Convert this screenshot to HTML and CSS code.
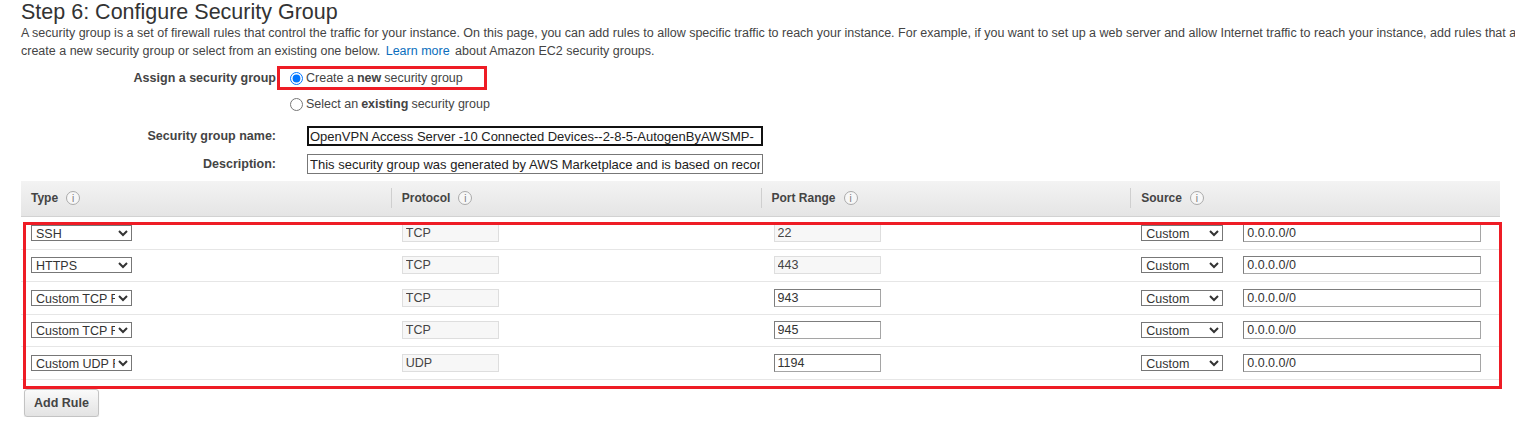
FILE: index.html
```html
<!DOCTYPE html>
<html>
<head>
    <title>Configure Security Group</title>
    <link rel="stylesheet" href="styles.css">
</head>
<body>
    <div class="page">
        <h1 class="title">Step 6: Configure Security Group</h1>
        <p class="intro">A security group is a set of firewall rules that control the traffic for your instance. On this page, you can add rules to allow specific traffic to reach your instance. For example, if you want to set up a web server and allow Internet traffic to reach your instance, add rules that allow unrestricted access to the HTTP and HTTPS ports. You can<br>create a new security group or select from an existing one below. <a href="#" class="learn-more">Learn more</a> about Amazon EC2 security groups.</p>

        <div class="form-row assign-row">
            <div class="form-label">Assign a security group</div>
            <div class="radio-list">
                <label class="radio-option"><input type="radio" name="sg-mode" checked>Create a <b>new</b> security group</label>
                <label class="radio-option"><input type="radio" name="sg-mode">Select an <b>existing</b> security group</label>
            </div>
            <div class="highlight highlight-radio"></div>
        </div>

        <div class="form-row name-row">
            <div class="form-label">Security group name:</div>
            <input type="text" class="text-field text-field-focus" value="OpenVPN Access Server -10 Connected Devices--2-8-5-AutogenByAWSMP-">
        </div>

        <div class="form-row desc-row">
            <div class="form-label">Description:</div>
            <input type="text" class="text-field" value="This security group was generated by AWS Marketplace and is based on recommended settings for OpenVPN Access Server -10 Connected Devices version 2.8.5 provided by OpenVPN Inc">
        </div>

        <div class="rules">
            <div class="rules-head">
                <div class="th">Type <span class="info">i</span></div>
                <div class="th">Protocol <span class="info">i</span></div>
                <div class="th">Port Range <span class="info">i</span></div>
                <div class="th">Source <span class="info">i</span></div>
            </div>

            <div class="rule-row">
                <div class="td td-type"><select class="type-select"><option>SSH</option></select></div>
                <div class="td"><input type="text" class="cell-input readonly proto" value="TCP" readonly></div>
                <div class="td"><input type="text" class="cell-input readonly port" value="22" readonly></div>
                <div class="td"><select class="source-select"><option>Custom</option></select><input type="text" class="cell-input cidr" value="0.0.0.0/0"></div>
            </div>
            <div class="rule-row">
                <div class="td td-type"><select class="type-select"><option>HTTPS</option></select></div>
                <div class="td"><input type="text" class="cell-input readonly proto" value="TCP" readonly></div>
                <div class="td"><input type="text" class="cell-input readonly port" value="443" readonly></div>
                <div class="td"><select class="source-select"><option>Custom</option></select><input type="text" class="cell-input cidr" value="0.0.0.0/0"></div>
            </div>
            <div class="rule-row">
                <div class="td td-type"><select class="type-select"><option>Custom TCP Rule</option></select></div>
                <div class="td"><input type="text" class="cell-input readonly proto" value="TCP" readonly></div>
                <div class="td"><input type="text" class="cell-input port" value="943"></div>
                <div class="td"><select class="source-select"><option>Custom</option></select><input type="text" class="cell-input cidr" value="0.0.0.0/0"></div>
            </div>
            <div class="rule-row">
                <div class="td td-type"><select class="type-select"><option>Custom TCP Rule</option></select></div>
                <div class="td"><input type="text" class="cell-input readonly proto" value="TCP" readonly></div>
                <div class="td"><input type="text" class="cell-input port" value="945"></div>
                <div class="td"><select class="source-select"><option>Custom</option></select><input type="text" class="cell-input cidr" value="0.0.0.0/0"></div>
            </div>
            <div class="rule-row">
                <div class="td td-type"><select class="type-select"><option>Custom UDP Rule</option></select></div>
                <div class="td"><input type="text" class="cell-input readonly proto" value="UDP" readonly></div>
                <div class="td"><input type="text" class="cell-input port" value="1194"></div>
                <div class="td"><select class="source-select"><option>Custom</option></select><input type="text" class="cell-input cidr" value="0.0.0.0/0"></div>
            </div>

            <div class="highlight highlight-rules"></div>
        </div>

        <button class="add-rule">Add Rule</button>
    </div>
</body>
</html>
```

FILE: styles.css
```css
* {
    margin: 0;
    padding: 0;
    box-sizing: border-box;
}

html, body {
    overflow: hidden;
}

body {
    background: #fff;
    color: #444;
    font-family: "Liberation Sans", Arial, sans-serif;
    font-size: 12px;
}

.page {
    padding-left: 21px;
}

.title {
    font-size: 21.5px;
    font-weight: normal;
    line-height: 24px;
    color: #333;
}

.intro {
    font-size: 12.5px;
    line-height: 18px;
    white-space: nowrap;
}

.learn-more {
    color: #0a6ebd;
    text-decoration: none;
    padding: 0 2px;
}

/* form rows */

.form-row {
    display: flex;
    align-items: center;
    font-size: 12.5px;
}

.form-label {
    width: 255px;
    text-align: right;
    font-weight: bold;
    color: #444;
}

.assign-row {
    position: relative;
    align-items: flex-start;
    margin-top: 6px;
}

.assign-row .form-label {
    line-height: 24px;
}

.radio-list {
    display: flex;
    flex-direction: column;
    gap: 2px;
    margin-left: 9px;
}

.radio-option {
    display: flex;
    align-items: center;
    height: 24px;
    color: #444;
}

.radio-option input {
    width: 13px;
    height: 13px;
    margin: 1px 3px 0 5px;
}

.radio-option b {
    margin: 0 3px;
}

.name-row {
    margin-top: 10px;
}

.desc-row {
    margin-top: 8px;
}

.text-field {
    width: 456px;
    height: 20px;
    margin-left: 31px;
    padding: 0 2px;
    border: 1px solid #777;
    font-family: inherit;
    font-size: 13px;
    color: #222;
    outline: none;
}

.text-field-focus {
    border: 2px solid #111;
    padding: 0 1px;
}

/* rules table */

.rules {
    position: relative;
    width: 1479px;
    margin-top: 7px;
}

.rules-head {
    display: grid;
    grid-template-columns: repeat(4, 1fr);
    height: 36px;
    background: linear-gradient(#f3f3f3, #e5e5e5);
    border-bottom: 1px solid #d2d2d2;
}

.th {
    display: flex;
    align-items: center;
    height: 20px;
    margin: 7px 0 8px;
    padding-left: 10px;
    font-weight: bold;
    color: #444;
}

.th + .th {
    border-left: 1px solid #cfcfcf;
}

.info {
    display: inline-flex;
    align-items: center;
    justify-content: center;
    width: 14px;
    height: 14px;
    margin-left: 8px;
    border: 1px solid #aaa;
    border-radius: 50%;
    background: #f7f7f7;
    font-size: 10px;
    font-weight: normal;
    color: #777;
}

.rule-row {
    display: grid;
    grid-template-columns: repeat(4, 1fr);
    align-items: center;
    height: 32.5px;
    border-bottom: 1px solid #e6e6e6;
}

.td {
    display: flex;
    align-items: center;
    padding-left: 11px;
}

.td-type {
    padding-left: 10px;
}

select {
    height: 16px;
    padding: 0;
    border: 1px solid #777;
    border-radius: 0;
    background: #fff;
    font-family: inherit;
    font-size: 12.5px;
    color: #333;
}

.type-select {
    width: 101px;
}

.source-select {
    width: 82px;
}

.cell-input {
    height: 18px;
    padding: 0 3px;
    border: 1px solid #a5a5a5;
    border-top-color: #7d7d7d;
    border-left-color: #7d7d7d;
    font-family: inherit;
    font-size: 12.5px;
    color: #333;
    outline: none;
}

.cell-input.readonly {
    background: #f7f7f7;
    border: 1px solid #dedede;
    color: #444;
}

.proto {
    width: 97px;
}

.port {
    width: 107px;
    margin-left: 2px;
}

.cidr {
    width: 238px;
    margin-left: 20px;
}

/* annotation boxes */

.highlight {
    position: absolute;
    border: 3px solid #ee1c25;
    pointer-events: none;
}

.highlight-radio {
    left: 256px;
    top: 0;
    width: 210px;
    height: 24px;
}

.highlight-rules {
    left: 2px;
    top: 41px;
    width: 1479px;
    height: 167px;
}

.add-rule {
    width: 75px;
    height: 28px;
    margin: 9px 0 0 3px;
    border: 1px solid #c3c3c3;
    border-radius: 3px;
    background: linear-gradient(#fafafa, #e3e3e3);
    box-shadow: 0 1px 1px rgba(0, 0, 0, 0.12);
    font-family: inherit;
    font-size: 12.5px;
    font-weight: bold;
    color: #444;
    cursor: pointer;
}
```
